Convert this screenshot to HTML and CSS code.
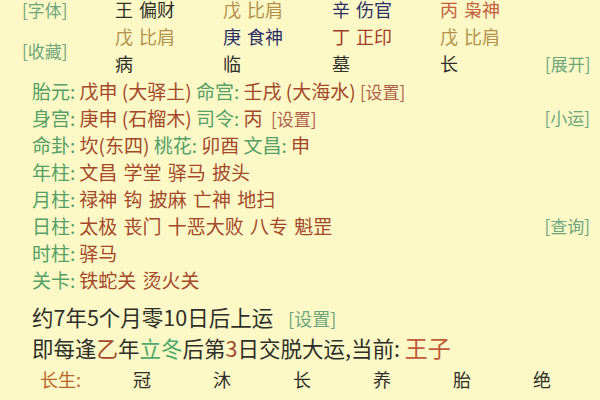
FILE: index.html
```html
<!DOCTYPE html>
<html lang="zh">
<head>
<meta charset="utf-8">
<link rel="stylesheet" href="styles.css">
</head>
<body>
<div class="page">
  <div class="pillars">
    <div class="link lbl r1">[字体]</div>
    <div class="cell dark">王 偏财</div>
    <div class="cell tan">戊 比肩</div>
    <div class="cell navy">辛 伤官</div>
    <div class="cell rust">丙 枭神</div>
    <div class="empty"></div>

    <div class="link lbl r23">[收藏]</div>
    <div class="cell tan">戊 比肩</div>
    <div class="cell navy">庚 食神</div>
    <div class="cell maroon">丁 正印</div>
    <div class="cell tan">戊 比肩</div>
    <div class="empty"></div>

    <div class="cell dark">病</div>
    <div class="cell dark">临</div>
    <div class="cell dark">墓</div>
    <div class="cell dark">长</div>
    <div class="link">[展开]</div>
  </div>

  <div class="info">
    <div class="row"><span><b class="g">胎元:</b> <span class="v">戊申 (大驿土)</span> <b class="g">命宫:</b> <span class="v">壬戌 (大海水)</span> <span class="set">[设置]</span></span></div>
    <div class="row"><span><b class="g">身宫:</b> <span class="v">庚申 (石榴木)</span> <b class="g">司令:</b> <span class="v">丙</span>&nbsp; <span class="set">[设置]</span></span><span class="link">[小运]</span></div>
    <div class="row"><span><b class="g">命卦:</b> <span class="v">坎(东四)</span> <b class="g">桃花:</b> <span class="v">卯酉</span> <b class="g">文昌:</b> <span class="v">申</span></span></div>
    <div class="row list"><span><b class="g">年柱:</b><span class="v">文昌 学堂 驿马 披头</span></span></div>
    <div class="row list"><span><b class="g">月柱:</b><span class="v">禄神 钩 披麻 亡神 地扫</span></span></div>
    <div class="row list"><span><b class="g">日柱:</b><span class="v">太极 丧门 十恶大败 八专 魁罡</span></span><span class="link">[查询]</span></div>
    <div class="row list"><span><b class="g">时柱:</b><span class="v">驿马</span></span></div>
    <div class="row list"><span><b class="g">关卡:</b><span class="v">铁蛇关 烫火关</span></span></div>
  </div>

  <div class="luck">
    <div class="l1">约7年5个月零10日后上运 <span class="set2">[设置]</span></div>
    <div class="l2">即每逢<span class="v">乙</span>年<span class="gg">立冬</span>后第<span class="v">3</span>日交脱大运,当前: <span class="cur">王子</span></div>
  </div>

  <div class="stages">
    <div class="slbl">长生:</div>
    <div class="st">冠</div>
    <div class="st">沐</div>
    <div class="st">长</div>
    <div class="st">养</div>
    <div class="st">胎</div>
    <div class="st">绝</div>
  </div>
  <div class="stages">
    <div class="slbl2">纳音:</div>
    <div class="st">涧下水</div>
    <div class="st">大溪水</div>
    <div class="st">大溪水</div>
    <div class="st">石榴木</div>
    <div class="st">石榴木</div>
    <div class="st">杨柳金</div>
  </div>
</div>
</body>
</html>
```

FILE: styles.css
```css
html, body {
  margin: 0;
  padding: 0;
  background: #fcf9c6;
}
body {
  font-family: "Noto Sans CJK SC", "Noto Sans", sans-serif;
  color: #2e2e2a;
  width: 600px;
  height: 400px;
  overflow: hidden;
}
.page {
  display: flex;
  flex-direction: column;
}
.pillars {
  display: grid;
  grid-template-columns: 115px 108px 109px 108px 105px 1fr;
  grid-template-rows: 27px 27px 27px;
  margin-top: -4px;
  align-items: center;
}
.cell {
  font-size: 18px;
  line-height: 27px;
  white-space: nowrap;
  word-spacing: 2px;
}
.lbl {
  padding-left: 22px;
}
.r1 { grid-row: 1; grid-column: 1; }
.r23 { grid-row: 2 / span 2; grid-column: 1; }
.link {
  color: #6ea57c;
  font-size: 17px;
  line-height: 27px;
  white-space: nowrap;
}
.dark { color: #2f2f2b; }
.tan { color: #b2914e; }
.navy { color: #2b2f68; }
.rust { color: #c2603f; }
.maroon { color: #a23a2a; }

.info {
  display: flex;
  flex-direction: column;
  padding-left: 32px;
  padding-right: 10px;
}
.row {
  display: flex;
  justify-content: space-between;
  align-items: center;
  height: 27px;
  font-size: 19px;
  white-space: nowrap;
}
.list { word-spacing: 2px; }
.list .v { margin-left: 4px; }
.g {
  font-weight: normal;
  color: #55a066;
}
.v { color: #a4482c; }
.set { color: #b0604a; font-size: 17px; }

.luck {
  display: flex;
  flex-direction: column;
  padding-left: 32px;
  margin-top: 8px;
  font-size: 21.5px;
  color: #2e2e2a;
  white-space: nowrap;
}
.l1 { height: 31px; line-height: 31px; }
.l2 { height: 30px; line-height: 30px; }
.set2 { color: #6ea57c; font-size: 18px; margin-left: 10px; }
.gg { color: #4fa86c; }
.cur { color: #c0583a; font-size: 23px; }

.stages {
  display: grid;
  grid-template-columns: 102px repeat(6, 80px);
  height: 34px;
  align-items: center;
  font-size: 18px;
}
.slbl {
  padding-left: 40px;
  color: #b5652e;
}
.slbl2 {
  padding-left: 40px;
  color: #b5652e;
}
.st {
  text-align: center;
  white-space: nowrap;
}
```
